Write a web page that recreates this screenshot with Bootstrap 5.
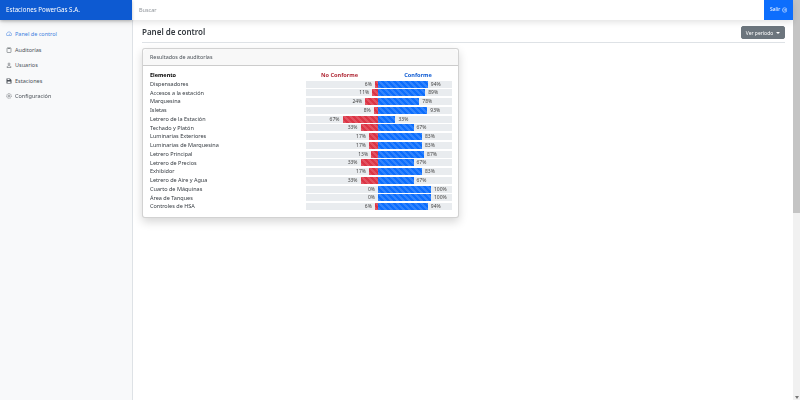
<!doctype html>
<html lang="es">
<head>
<meta charset="utf-8">
<title>Panel de control</title>
<link href="https://cdn.jsdelivr.net/npm/bootstrap@5.3.3/dist/css/bootstrap.min.css" rel="stylesheet">
<style>
html, body { height: 100%; overflow: hidden; }
body { font-family: "Noto Sans", "Liberation Sans", sans-serif; font-size: 5.5px; color: #212529; background: #fff; }
.page-wrap { width: 800px; height: 400px; filter: blur(.3px); }
.page-col { width: 793px; }
.scroll-track { width: 7px; background: #f1f1f1; }
.scroll-thumb { height: 213px; background: #c4c4c4; }
.scroll-arrow { width: 0; height: 0; border-left: 2px solid transparent; border-right: 2px solid transparent; border-top: 3px solid #777; margin: 0 auto 1px; }
.top-bar { height: 20px; box-shadow: 0 2px 6px rgba(0,0,0,.12); z-index: 2; }
.brand-box { width: 132px; background: #0d5ad2; color: #fff; font-size: 6.2px; font-weight: 400; padding-left: 6px; box-shadow: 0 1px 3px rgba(0,0,0,.25); }
.search-txt { padding-left: 7px; color: #8d9298; font-size: 5.5px; }
.exit-btn { width: 29px; background: #0d6efd; color: #fff; font-size: 5px; border: 0; gap: 1.5px; }
.side-col { width: 133px; background: #f8f9fa; border-right: 1px solid #dee2e6; padding-top: 6.5px; }
.side-item { height: 15.5px; padding-left: 6px; gap: 3px; color: #4a5057; font-size: 5.5px; font-weight: 400; }
.side-item.is-on { color: #3d7fe0; }
.main-col { padding: 0 8px 0 9px; }
.title-row { height: 23px; padding-top: 2px; border-bottom: 1px solid #dee2e6; margin-bottom: 5px; }
.title-row h1 { font-size: 8px; font-weight: 600; margin: 0; color: #343a40; }
.period-btn { height: 13px; width: 44px; padding: 0; font-size: 5px; border-radius: 2px; --bs-btn-bg: #6c757d; line-height: 13px; }
.period-btn::after { margin-left: 3px; vertical-align: 1px; border-top-width: 2px; border-left-width: 2px; border-right-width: 2px; }
.audit-card { width: 317px; height: 170px; border-radius: 3px; box-shadow: 0 4px 10px rgba(0,0,0,.16); }
.audit-card .card-header { height: 17px; padding: 0 0 0 7px; line-height: 16px; font-size: 5.4px; color: #495057; }
.audit-body { padding: 5px 5px 0 7px; }
.chart-row { height: 8.75px; line-height: 8.75px; }
.row-label { flex: none; width: 156px; color: #343a40; font-size: 5.5px; }
.row-head { font-weight: 700; color: #000; }
.bar-track { flex: none; width: 146px; height: 7px; background: #e9ecef; font-size: 5px; line-height: 7px; color: #444; }
.bar-side-l { width: 72px; justify-content: flex-end; gap: 3px; }
.bar-side-r { width: 74px; gap: 3px; }
.bar-seg { height: 7px; flex: none; }
.bar-red { background-color: #dc3545; }
.bar-blue { background-color: #0d6efd; }
.bar-seg.progress-bar-striped { background-size: 6px 6px; }
.head-cell { flex: none; text-align: center; font-weight: 700; font-size: 5.6px; }
.head-red { width: 67px; color: #b02a37; }
.head-blue { width: 90px; color: #0d5ad2; }
</style>
</head>
<body>
<div class="page-wrap d-flex">
  <div class="page-col d-flex flex-column">
    <div class="top-bar d-flex bg-white">
      <div class="brand-box d-flex align-items-center">Estaciones PowerGas S.A.</div>
      <div class="search-txt flex-grow-1 d-flex align-items-center">Buscar</div>
      <button class="exit-btn d-flex align-items-center justify-content-center" type="button">Salir
        <svg width="6" height="6" viewBox="0 0 12 12" fill="none" stroke="#fff" stroke-width="1.2"><circle cx="6" cy="6" r="5"/><path d="M3.5 6h5M6.5 4l2 2-2 2"/></svg>
      </button>
    </div>
    <div class="d-flex flex-grow-1">
      <nav class="side-col">
        <div class="side-item is-on d-flex align-items-center">
          <svg width="6" height="6" viewBox="0 0 12 12" fill="none" stroke="currentColor"><path d="M1.5 9a5 5 0 1 1 9 0zM6 8l2-3"/></svg>Panel de control
        </div>
        <div class="side-item d-flex align-items-center">
          <svg width="6" height="6" viewBox="0 0 12 12" fill="none" stroke="currentColor"><rect x="2" y="2" width="8" height="9" rx="1"/><path d="M4 1v2h4V1"/></svg>Auditorías
        </div>
        <div class="side-item d-flex align-items-center">
          <svg width="6" height="6" viewBox="0 0 12 12" fill="none" stroke="currentColor"><circle cx="6" cy="4" r="2"/><path d="M2 11c0-5 8-5 8 0z"/></svg>Usuarios
        </div>
        <div class="side-item d-flex align-items-center">
          <svg width="6" height="6" viewBox="0 0 12 12" fill="currentColor"><path d="M1 1h7l3 3v7H1zM3 2v2h4V2zM3 7v3h6V7z"/></svg>Estaciones
        </div>
        <div class="side-item d-flex align-items-center">
          <svg width="6" height="6" viewBox="0 0 12 12" fill="none" stroke="currentColor"><circle cx="6" cy="6" r="2"/><circle cx="6" cy="6" r="4.8" stroke-dasharray="2 1"/></svg>Configuración
        </div>
      </nav>
      <main class="main-col flex-grow-1">
        <div class="title-row d-flex justify-content-between align-items-center">
          <h1>Panel de control</h1>
          <button class="btn btn-secondary dropdown-toggle period-btn" type="button">Ver período</button>
        </div>
        <div class="card audit-card">
          <div class="card-header">Resultados de auditorías</div>
          <div class="audit-body" id="chart">
            <div class="chart-row d-flex">
              <div class="row-label row-head">Elemento</div>
              <div class="head-cell head-red">No Conforme</div>
              <div class="head-cell head-blue">Conforme</div>
            </div>
          </div>
        </div>
      </main>
    </div>
  </div>
  <div class="scroll-track d-flex flex-column justify-content-between">
    <div class="scroll-thumb"></div>
    <div class="scroll-arrow"></div>
  </div>
</div>
<script>
  const rows = [
    ["Dispensadores", 6, 94], ["Accesos a la estación", 11, 89], ["Marquesina", 24, 78],
    ["Isletas", 8, 93], ["Letrero de la Estación", 67, 33], ["Techado y Platón", 33, 67],
    ["Luminarias Exteriores", 17, 83], ["Luminarias de Marquesina", 17, 83], ["Letrero Principal", 13, 87],
    ["Letrero de Precios", 33, 67], ["Exhibidor", 17, 83], ["Letrero de Aire y Agua", 33, 67],
    ["Cuarto de Máquinas", 0, 100], ["Área de Tanques", 0, 100], ["Controles de HSA", 6, 94]
  ];
  const scale = 0.53;
  const chart = document.getElementById("chart");
  rows.forEach(([name, no, yes]) => {
    chart.insertAdjacentHTML("beforeend", `
      <div class="chart-row d-flex align-items-center">
        <div class="row-label">${name}</div>
        <div class="bar-track d-flex">
          <div class="bar-side-l d-flex">${no}%<div class="bar-seg bar-red progress-bar-striped" style="width:${no * scale}px"></div></div>
          <div class="bar-side-r d-flex"><div class="bar-seg bar-blue progress-bar-striped" style="width:${yes * scale}px"></div>${yes}%</div>
        </div>
      </div>`);
  });
</script>
<script src="https://cdn.jsdelivr.net/npm/bootstrap@5.3.3/dist/js/bootstrap.bundle.min.js"></script>
</body>
</html>
